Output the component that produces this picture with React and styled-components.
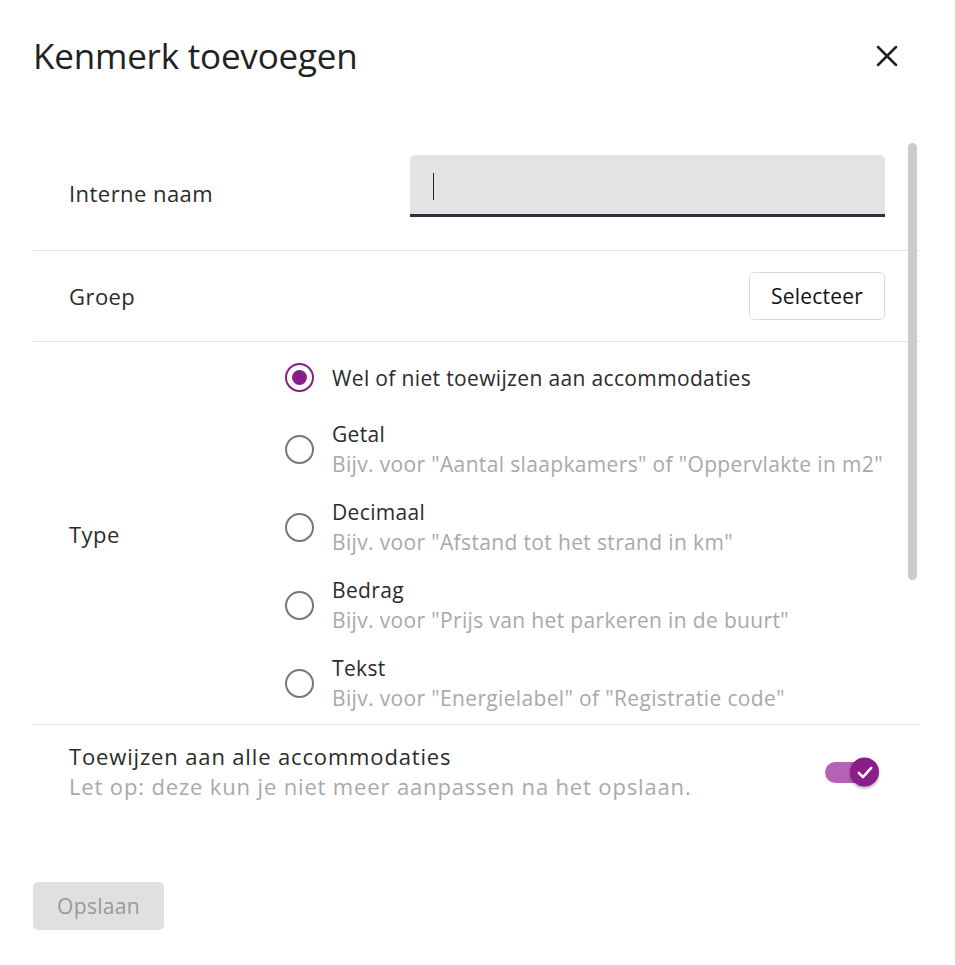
import React from "react";
import styled, { createGlobalStyle } from "styled-components";

const GlobalStyle = createGlobalStyle`
    html, body {
        margin: 0;
        padding: 0;
        background: #fff;
    }
    body {
        font-family: "Open Sans", "Noto Sans", sans-serif;
        color: #2b2b2b;
    }
`;

const options = [
    { title: "Wel of niet toewijzen aan accommodaties" },
    { title: "Getal", hint: 'Bijv. voor "Aantal slaapkamers" of "Oppervlakte in m2"' },
    { title: "Decimaal", hint: 'Bijv. voor "Afstand tot het strand in km"' },
    { title: "Bedrag", hint: 'Bijv. voor "Prijs van het parkeren in de buurt"' },
    { title: "Tekst", hint: 'Bijv. voor "Energielabel" of "Registratie code"' },
];

export default function App() {
    const [type, setType] = React.useState(0);
    const [all, setAll] = React.useState(true);
    return (
        <>
            <GlobalStyle />
            <Dialog>
                <Header>
                    <Title>Kenmerk toevoegen</Title>
                    <CloseButton aria-label="Sluiten">
                        <svg width="22" height="22" viewBox="0 0 22 22">
                            <path
                                d="M2 2 L20 20 M20 2 L2 20"
                                stroke="#222"
                                strokeWidth="2.5"
                                strokeLinecap="round"
                            />
                        </svg>
                    </CloseButton>
                </Header>
                <Body>
                    <ScrollThumb />
                    <Row $top="24px" $bottom="33px">
                        <Label $shift="14px">Interne naam</Label>
                        <Field>
                            <Caret />
                        </Field>
                    </Row>
                    <Row $top="21px" $bottom="21px">
                        <Label>Groep</Label>
                        <OutlineButton>Selecteer</OutlineButton>
                    </Row>
                    <TypeRow>
                        <Label>Type</Label>
                        <RadioList>
                            {options.map((o, i) => (
                                <RadioItem key={o.title} onClick={() => setType(i)}>
                                    <RadioCircle $checked={type === i} />
                                    <RadioText>
                                        <span>{o.title}</span>
                                        {o.hint && <Hint>{o.hint}</Hint>}
                                    </RadioText>
                                </RadioItem>
                            ))}
                        </RadioList>
                    </TypeRow>
                    <Row $top="16px" $bottom="17px" $last>
                        <Notice>
                            <span>Toewijzen aan alle accommodaties</span>
                            <Hint>Let op: deze kun je niet meer aanpassen na het opslaan.</Hint>
                        </Notice>
                        <Switch onClick={() => setAll(!all)} $on={all}>
                            <Thumb $on={all}>
                                {all && (
                                    <svg width="20" height="20" viewBox="0 0 24 24">
                                        <path
                                            d="M4.5 12.5 L9.5 17.5 L19.5 6.5"
                                            fill="none"
                                            stroke="#fff"
                                            strokeWidth="3"
                                            strokeLinecap="round"
                                            strokeLinejoin="round"
                                        />
                                    </svg>
                                )}
                            </Thumb>
                        </Switch>
                    </Row>
                </Body>
                <Footer>
                    <SaveButton disabled>Opslaan</SaveButton>
                </Footer>
            </Dialog>
        </>
    );
}

const Dialog = styled.div`
    width: 955px;
    height: 965px;
    padding: 0 35px 0 33px;
    box-sizing: border-box;
    display: flex;
    flex-direction: column;
`;

const Header = styled.div`
    display: flex;
    align-items: center;
    justify-content: space-between;
    height: 112px;
    box-sizing: border-box;
`;

const Title = styled.h1`
    margin: 0 0 2px;
    font-family: "Open Sans", "Noto Sans", sans-serif;
    font-weight: 400;
    font-size: 35px;
    color: #222;
    letter-spacing: -0.2px;
`;

const CloseButton = styled.button`
    border: 0;
    background: none;
    padding: 0;
    margin-right: 22px;
    width: 22px;
    height: 22px;
    display: flex;
    cursor: pointer;
`;

const Body = styled.div`
    position: relative;
    display: flex;
    flex-direction: column;
    padding-top: 19px;
`;

const ScrollThumb = styled.div`
    position: absolute;
    right: 3px;
    top: 31px;
    width: 9px;
    height: 437px;
    border-radius: 5px;
    background: #cbcbcb;
`;

const Row = styled.div`
    display: flex;
    align-items: center;
    justify-content: space-between;
    padding: ${(p) => p.$top} 35px ${(p) => p.$bottom} 36px;
    border-bottom: ${(p) => (p.$last ? "none" : "1px solid #e2e2e2")};
`;

const Label = styled.div`
    font-size: 22px;
    letter-spacing: 0.45px;
    color: #2b2b2b;
    margin-top: ${(p) => p.$shift || "0"};
`;

const Field = styled.div`
    width: 475px;
    height: 62px;
    box-sizing: border-box;
    background: #e3e3e3;
    border-radius: 5px 5px 0 0;
    border-bottom: 3px solid #2e2f3b;
    display: flex;
    align-items: center;
    padding: 3px 0 0 23px;
`;

const Caret = styled.div`
    width: 1px;
    height: 27px;
    background: #222;
`;

const OutlineButton = styled.button`
    height: 48px;
    padding: 0 21px;
    background: #fff;
    border: 1px solid #dcdcdc;
    border-radius: 5px;
    font-family: inherit;
    font-size: 21px;
    letter-spacing: 0.2px;
    color: #111;
    cursor: pointer;
`;

const TypeRow = styled.div`
    display: grid;
    grid-template-columns: 216px 1fr;
    align-items: center;
    padding: 12px 0 11px 36px;
    border-bottom: 1px solid #e2e2e2;
`;

const RadioList = styled.div`
    display: flex;
    flex-direction: column;
    gap: 18px;
`;

const RadioItem = styled.label`
    display: flex;
    align-items: center;
    gap: 18px;
    min-height: 47px;
    cursor: pointer;
`;

const RadioCircle = styled.span`
    width: 25px;
    height: 25px;
    border-radius: 50%;
    border: 2.5px solid ${(p) => (p.$checked ? "#8b1c8b" : "#777")};
    flex-shrink: 0;
    position: relative;
    &::after {
        content: "";
        display: ${(p) => (p.$checked ? "block" : "none")};
        position: absolute;
        inset: 5px;
        border-radius: 50%;
        background: #8b1c8b;
    }
`;

const RadioText = styled.div`
    display: flex;
    flex-direction: column;
    font-size: 21px;
    letter-spacing: 0.35px;
    line-height: 30px;
    color: #2b2b2b;
`;

const Notice = styled(RadioText)`
    font-size: 22px;
    line-height: 30px;
    letter-spacing: 0.85px;
`;

const Hint = styled.span`
    color: #a9a9a9;
`;

const Switch = styled.div`
    position: relative;
    width: 46px;
    height: 21px;
    border-radius: 11px;
    background: ${(p) => (p.$on ? "#b561b5" : "#bbb")};
    margin: 2px 14px 0 0;
    cursor: pointer;
`;

const Thumb = styled.div`
    position: absolute;
    top: 50%;
    left: ${(p) => (p.$on ? "25px" : "-4px")};
    transform: translateY(-50%);
    width: 29px;
    height: 29px;
    border-radius: 50%;
    background: ${(p) => (p.$on ? "#8b1c8b" : "#f5f5f5")};
    box-shadow: 0 2px 3px rgba(0, 0, 0, 0.3);
    display: flex;
    align-items: center;
    justify-content: center;
`;

const Footer = styled.div`
    margin-top: 64px;
`;

const SaveButton = styled.button`
    height: 48px;
    width: 131px;
    border: 0;
    border-radius: 5px;
    background: #e0e0e0;
    color: #999;
    font-family: inherit;
    font-size: 21px;
    letter-spacing: 0.3px;
`;
